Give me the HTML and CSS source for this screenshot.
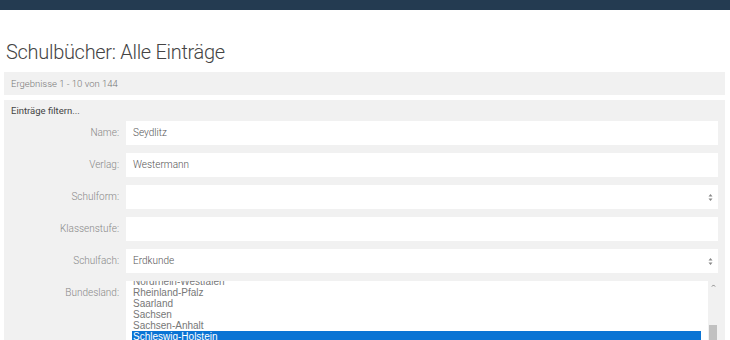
FILE: index.html
```html
<!doctype html>
<html lang="de">
<head>
    <meta charset="UTF-8">
    <title>Schulbücher: Alle Einträge</title>
    <link rel="stylesheet" href="styles.css">
</head>
<body>
    <div class="topbar"></div>
    <div class="page">
        <h1 class="title">Schulbücher: Alle Einträge</h1>
        <div class="results">Ergebnisse 1 - 10 von 144</div>
        <div class="filter">
            <div class="filter-head">Einträge filtern...</div>
            <div class="form">
                <label class="lbl">Name:</label>
                <div class="field">Seydlitz</div>

                <label class="lbl">Verlag:</label>
                <div class="field">Westermann</div>

                <label class="lbl">Schulform:</label>
                <div class="field select">
                    <span></span>
                    <svg class="arrows" width="5" height="9" viewBox="0 0 5 9"><path d="M0.5 3.5 L2.5 1 L4.5 3.5 Z M0.5 5.5 L2.5 8 L4.5 5.5 Z" fill="#888"/></svg>
                </div>

                <label class="lbl">Klassenstufe:</label>
                <div class="field"></div>

                <label class="lbl">Schulfach:</label>
                <div class="field select">
                    <span>Erdkunde</span>
                    <svg class="arrows" width="5" height="9" viewBox="0 0 5 9"><path d="M0.5 3.5 L2.5 1 L4.5 3.5 Z M0.5 5.5 L2.5 8 L4.5 5.5 Z" fill="#888"/></svg>
                </div>

                <label class="lbl">Bundesland:</label>
                <div class="listbox">
                    <div class="options">
                        <div class="opt">Nordrhein-Westfalen</div>
                        <div class="opt">Rheinland-Pfalz</div>
                        <div class="opt">Saarland</div>
                        <div class="opt">Sachsen</div>
                        <div class="opt">Sachsen-Anhalt</div>
                        <div class="opt selected">Schleswig-Holstein</div>
                        <div class="opt">Thüringen</div>
                    </div>
                    <div class="scrollbar">
                        <svg class="up" width="7" height="5" viewBox="0 0 7 5"><path d="M1 4 L3.5 1.5 L6 4" fill="none" stroke="#666" stroke-width="1.2"/></svg>
                        <span class="thumb"></span>
                    </div>
                </div>
            </div>
        </div>
    </div>
</body>
</html>
```

FILE: styles.css
```css
html , body
{
    margin : 0 ;
    padding : 0 ;
    background : #ffffff ;
    font-family : Roboto , "Liberation Sans" , sans-serif ;
    overflow : hidden ;
}
.topbar
{
    height : 10px ;
    background : #243b51 ;
}
.page
{
    padding : 0 5px 0 4px ;
}
.title
{
    margin : 28px 0 0 2px ;
    font-size : 20px ;
    font-weight : 300 ;
    color : #444 ;
    line-height : 28px ;
    letter-spacing : -0.3px ;
}
.results
{
    margin-top : 6px ;
    height : 23px ;
    line-height : 23px ;
    padding-left : 7px ;
    background : #f1f1f1 ;
    font-size : 9.5px ;
    font-weight : 300 ;
    color : #777 ;
}
.filter
{
    margin-top : 5px ;
    background : #f1f1f1 ;
    padding : 0 7px 0 0 ;
    height : 240px ;
    overflow : hidden ;
}
.filter-head
{
    height : 21px ;
    line-height : 22px ;
    padding-left : 7px ;
    font-size : 9.5px ;
    color : #444 ;
}
.form
{
    display : grid ;
    grid-template-columns : 115px 1fr ;
    column-gap : 7px ;
    row-gap : 8px ;
}
.lbl
{
    text-align : right ;
    font-size : 10px ;
    font-weight : 300 ;
    color : #888 ;
    line-height : 24px ;
}
.field
{
    height : 24px ;
    line-height : 24px ;
    background : #ffffff ;
    padding-left : 7px ;
    font-size : 10px ;
    font-weight : 300 ;
    color : #555 ;
    box-sizing : border-box ;
}
.select
{
    display : flex ;
    justify-content : space-between ;
    align-items : center ;
    padding-right : 5px ;
}
.listbox
{
    display : flex ;
    height : 70px ;
    background : #ffffff ;
    overflow : hidden ;
}
.options
{
    flex : 1 ;
    padding : 0 0 0 6px ;
    font-family : "Liberation Sans" , Arial , sans-serif ;
    font-size : 10px ;
    color : #777 ;
}
.opt
{
    height : 11px ;
    line-height : 11px ;
    padding-left : 1px ;
}
.opt:first-child
{
    margin-top : -5px ;
}
.selected
{
    background : #0a74d4 ;
    color : #ffffff ;
}
.scrollbar
{
    width : 10px ;
    margin-left : 7px ;
    background : #f1f1f1 ;
    display : flex ;
    flex-direction : column ;
    align-items : center ;
}
.up
{
    margin-top : 3px ;
}
.thumb
{
    margin-top : 38px ;
    width : 8px ;
    height : 40px ;
    background : #c1c1c1 ;
}
```
